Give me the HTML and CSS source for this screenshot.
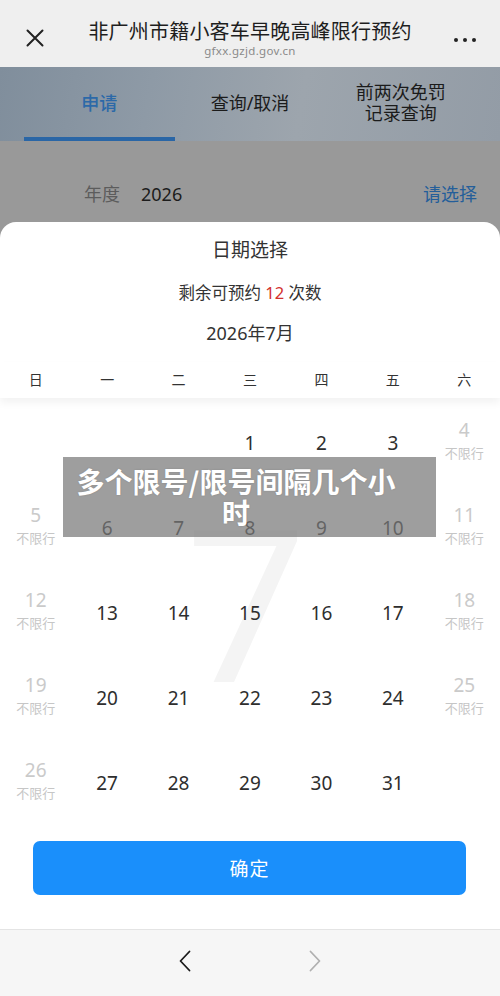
FILE: index.html
```html
<!DOCTYPE html>
<html lang="zh-CN">
<head>
<meta charset="utf-8">
<title>非广州市籍小客车早晚高峰限行预约</title>
<link rel="stylesheet" href="styles.css">
</head>
<body>
<div class="app">
  <header class="header">
    <div class="hdr-left">
      <svg class="icon-close" width="18" height="18" viewBox="0 0 18 18"><path d="M1.5 1.5 L16.5 16.5 M16.5 1.5 L1.5 16.5" stroke="#222" stroke-width="2" stroke-linecap="round" fill="none"/></svg>
    </div>
    <div class="hdr-center">
      <div class="hdr-title">非广州市籍小客车早晚高峰限行预约</div>
      <div class="hdr-url">gfxx.gzjd.gov.cn</div>
    </div>
    <div class="hdr-right">
      <span class="dot"></span><span class="dot"></span><span class="dot"></span>
    </div>
  </header>

  <nav class="tabs">
    <div class="tab active">申请</div>
    <div class="tab">查询/取消</div>
    <div class="tab">前两次免罚<br>记录查询</div>
  </nav>

  <div class="backdrop">
    <div class="form-row">
      <span class="lbl">年度</span>
      <span class="val">2026</span>
      <span class="pick">请选择</span>
    </div>

    <section class="sheet">
      <h2 class="sheet-title">日期选择</h2>
      <p class="remain">剩余可预约 <span class="red">12</span> 次数</p>
      <p class="month">2026年7月</p>
      <div class="weekdays">
        <span>日</span><span>一</span><span>二</span><span>三</span><span>四</span><span>五</span><span>六</span>
      </div>
      <div class="grid-wrap">
        <div class="watermark">7</div>
        <div class="grid">
          <div class="cell"></div><div class="cell"></div><div class="cell"></div>
          <div class="cell"><span class="num">1</span></div>
          <div class="cell"><span class="num">2</span></div>
          <div class="cell"><span class="num">3</span></div>
          <div class="cell off"><span class="num">4</span><span class="tag">不限行</span></div>

          <div class="cell off"><span class="num">5</span><span class="tag">不限行</span></div>
          <div class="cell"><span class="num">6</span></div>
          <div class="cell"><span class="num">7</span></div>
          <div class="cell"><span class="num">8</span></div>
          <div class="cell"><span class="num">9</span></div>
          <div class="cell"><span class="num">10</span></div>
          <div class="cell off"><span class="num">11</span><span class="tag">不限行</span></div>

          <div class="cell off"><span class="num">12</span><span class="tag">不限行</span></div>
          <div class="cell"><span class="num">13</span></div>
          <div class="cell"><span class="num">14</span></div>
          <div class="cell"><span class="num">15</span></div>
          <div class="cell"><span class="num">16</span></div>
          <div class="cell"><span class="num">17</span></div>
          <div class="cell off"><span class="num">18</span><span class="tag">不限行</span></div>

          <div class="cell off"><span class="num">19</span><span class="tag">不限行</span></div>
          <div class="cell"><span class="num">20</span></div>
          <div class="cell"><span class="num">21</span></div>
          <div class="cell"><span class="num">22</span></div>
          <div class="cell"><span class="num">23</span></div>
          <div class="cell"><span class="num">24</span></div>
          <div class="cell off"><span class="num">25</span><span class="tag">不限行</span></div>

          <div class="cell off"><span class="num">26</span><span class="tag">不限行</span></div>
          <div class="cell"><span class="num">27</span></div>
          <div class="cell"><span class="num">28</span></div>
          <div class="cell"><span class="num">29</span></div>
          <div class="cell"><span class="num">30</span></div>
          <div class="cell"><span class="num">31</span></div>
          <div class="cell"></div>
        </div>
      </div>
      <button class="confirm">确定</button>
    </section>
  </div>

  <footer class="bottombar">
    <svg class="chev" width="14" height="22" viewBox="0 0 14 22"><path d="M11.5 1.5 L2.5 11 L11.5 20.5" stroke="#1a1a1a" stroke-width="1.8" fill="none" stroke-linecap="round" stroke-linejoin="round"/></svg>
    <svg class="chev" width="14" height="22" viewBox="0 0 14 22"><path d="M2.5 1.5 L11.5 11 L2.5 20.5" stroke="#b0b0b0" stroke-width="1.8" fill="none" stroke-linecap="round" stroke-linejoin="round"/></svg>
  </footer>

  <div class="banner">多个限号/限号间隔几个小时</div>
</div>
</body>
</html>
```

FILE: styles.css
```css
* { box-sizing: border-box; }
html, body { margin: 0; padding: 0; }
body {
  width: 500px;
  height: 996px;
  overflow: hidden;
  font-family: "Noto Sans", "Noto Sans CJK SC", sans-serif;
  color: #333;
}
.app {
  position: relative;
  width: 500px;
  height: 996px;
  display: flex;
  flex-direction: column;
}

/* header */
.header {
  height: 67px;
  background: #efefef;
  display: grid;
  grid-template-columns: 70px 1fr 70px;
  align-items: start;
}
.hdr-left { padding: 29px 0 0 26px; }
.icon-close { display: block; }
.hdr-center {
  padding-top: 20px;
  text-align: center;
}
.hdr-title {
  font-size: 20px;
  line-height: 24px;
  color: #1e1e1e;
  letter-spacing: 0.2px;
  white-space: nowrap;
}
.hdr-url {
  font-size: 11.5px;
  line-height: 14px;
  color: #8a8a8a;
  letter-spacing: 0.3px;
}
.hdr-right {
  padding: 38px 24px 0 0;
  display: flex;
  justify-content: flex-end;
  gap: 5px;
}
.dot {
  width: 4px;
  height: 4px;
  border-radius: 50%;
  background: #222;
}

/* tabs (dimmed) */
.tabs {
  height: 74px;
  padding: 0 24px;
  display: grid;
  grid-template-columns: 1fr 1fr 1fr;
  background: linear-gradient(100deg, #808e9c 0%, #8e9aa6 30%, #9da5ad 60%, #939ca6 100%);
}
.tab {
  display: flex;
  align-items: center;
  justify-content: center;
  text-align: center;
  font-size: 18px;
  line-height: 21px;
  color: #1b1b1b;
  border-bottom: 4px solid transparent;
  padding-top: 2px;
}
.tab.active {
  color: #2c69a8;
  border-bottom-color: #2a66a6;
  font-weight: 500;
}

/* dim backdrop area */
.backdrop {
  flex: 1;
  display: flex;
  flex-direction: column;
  background: #999;
}
.form-row {
  height: 81px;
  padding: 41px 23px 0 84px;
  display: flex;
  align-items: flex-start;
  font-size: 18px;
  line-height: 24px;
}
.lbl { color: #5c5c5c; }
.val { color: #1c1c1c; margin-left: 21px; }
.pick { color: #245e9a; margin-left: auto; }

/* sheet */
.sheet {
  flex: 1;
  background: #fff;
  border-radius: 16px 16px 0 0;
  display: flex;
  flex-direction: column;
  align-items: stretch;
  padding-top: 15px;
}
.sheet-title {
  margin: 0;
  text-align: center;
  font-size: 19px;
  line-height: 26px;
  font-weight: 400;
  color: #333;
}
.remain {
  margin: 18px 0 0;
  text-align: center;
  font-size: 16.5px;
  line-height: 24px;
  color: #333;
}
.red { color: #d3302c; }
.month {
  margin: 16px 0 0;
  text-align: center;
  font-size: 18px;
  line-height: 24px;
  color: #333;
}
.weekdays {
  position: relative;
  z-index: 1;
  margin-top: 17px;
  height: 36px;
  display: grid;
  grid-template-columns: repeat(7, 1fr);
  text-align: center;
  font-size: 14px;
  line-height: 36px;
  color: #333;
  background: #fff;
  box-shadow: 0 5px 8px rgba(0, 0, 0, 0.05);
}

.grid-wrap {
  position: relative;
  padding-top: 2px;
}
.watermark {
  position: absolute;
  left: 186px;
  top: 104px;
  font-family: Roboto, "Noto Sans", sans-serif;
  font-weight: 400;
  font-size: 214px;
  line-height: 1;
  color: #f4f4f4;
  pointer-events: none;
}
.grid {
  position: relative;
  display: grid;
  grid-template-columns: repeat(7, 1fr);
  grid-auto-rows: 85px;
}
.cell {
  display: flex;
  flex-direction: column;
  align-items: center;
  justify-content: center;
}
.num {
  font-size: 19px;
  line-height: 24px;
  color: #2e2e2e;
}
.cell.off .num {
  color: #cacaca;
  margin-top: -6px;
}
.tag {
  font-size: 13px;
  line-height: 18px;
  color: #c6c6c6;
  margin-top: 2px;
}

.confirm {
  margin: 16px 34px 0 33px;
  height: 54px;
  border: 0;
  border-radius: 7px;
  background: #1a8ffb;
  color: #fff;
  font-family: "Noto Sans", "Noto Sans CJK SC", sans-serif;
  font-size: 19px;
  letter-spacing: 1px;
}

/* bottom bar */
.bottombar {
  height: 67px;
  background: #f6f6f6;
  border-top: 1px solid #e4e4e4;
  display: flex;
  align-items: center;
  justify-content: center;
  gap: 116px;
  padding-bottom: 4px;
}
.chev { display: block; }

/* overlay banner */
.banner {
  position: absolute;
  left: 63px;
  top: 457px;
  width: 373px;
  height: 80px;
  background: rgba(120, 120, 120, 0.72);
  color: #fff;
  font-family: "Noto Sans CJK SC", sans-serif;
  font-weight: 700;
  font-size: 28px;
  line-height: 31px;
  padding: 9px 36px 0 9px;
  text-align: center;
  text-shadow: 0 0 2px rgba(0, 0, 0, 0.15);
}
```
